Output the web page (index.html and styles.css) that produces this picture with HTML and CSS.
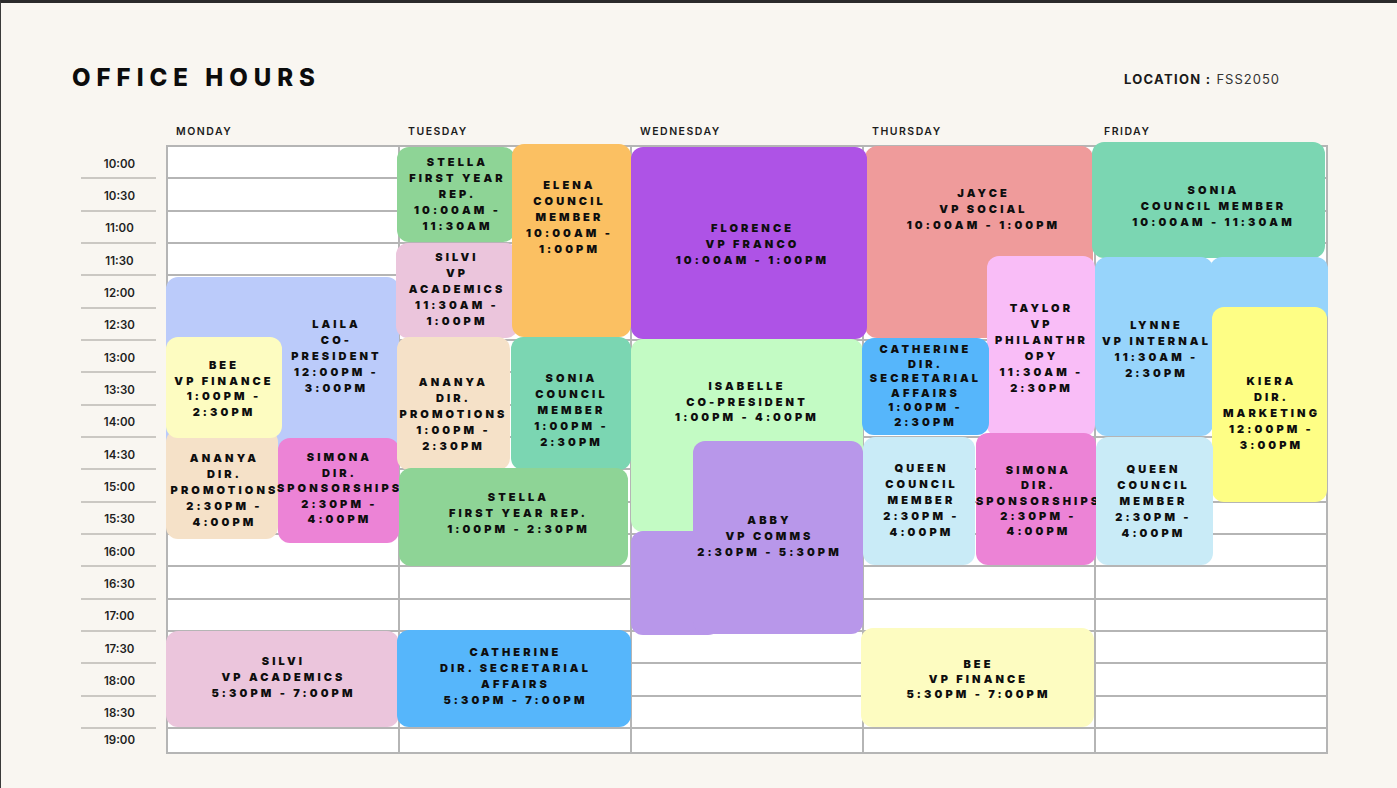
FILE: index.html
```html
<!DOCTYPE html>
<html lang="en">
<head>
<meta charset="utf-8">
<title>Office Hours</title>
<link rel="stylesheet" href="styles.css">
</head>
<body>
<div class="page">
  <header class="top">
    <h1 class="title">OFFICE HOURS</h1>
    <div class="location"><b>LOCATION :</b> <span>FSS2050</span></div>
  </header>

  <section class="board">
    <div class="days">
      <div class="day">MONDAY</div>
      <div class="day">TUESDAY</div>
      <div class="day">WEDNESDAY</div>
      <div class="day">THURSDAY</div>
      <div class="day">FRIDAY</div>
    </div>

    <div class="body">
      <div class="times">
        <div class="time">10:00</div>
        <div class="time">10:30</div>
        <div class="time">11:00</div>
        <div class="time">11:30</div>
        <div class="time">12:00</div>
        <div class="time">12:30</div>
        <div class="time">13:00</div>
        <div class="time">13:30</div>
        <div class="time">14:00</div>
        <div class="time">14:30</div>
        <div class="time">15:00</div>
        <div class="time">15:30</div>
        <div class="time">16:00</div>
        <div class="time">16:30</div>
        <div class="time">17:00</div>
        <div class="time">17:30</div>
        <div class="time">18:00</div>
        <div class="time">18:30</div>
        <div class="time last">19:00</div>
      </div>

      <div class="grid">
        <div class="row"></div><div class="row"></div><div class="row"></div>
        <div class="row"></div><div class="row"></div><div class="row"></div>
        <div class="row"></div><div class="row"></div><div class="row"></div>
        <div class="row"></div><div class="row"></div><div class="row"></div>
        <div class="row"></div><div class="row"></div><div class="row"></div>
        <div class="row"></div><div class="row"></div><div class="row"></div>
        <div class="row last"></div>

        <!-- Monday -->
        <div class="ev c-blue-soft mon-laila"><p>LAILA<br>CO-<br>PRESIDENT<br>12:00PM -<br>3:00PM</p></div>
        <div class="ev c-peach mon-ananya"><p>ANANYA<br>DIR.<br>PROMOTIONS<br>2:30PM -<br>4:00PM</p></div>
        <div class="ev c-cream mon-bee"><p>BEE<br>VP FINANCE<br>1:00PM -<br>2:30PM</p></div>
        <div class="ev c-magenta mon-simona"><p>SIMONA<br>DIR.<br>SPONSORSHIPS<br>2:30PM -<br>4:00PM</p></div>
        <div class="ev c-rose mon-silvi"><p>SILVI<br>VP ACADEMICS<br>5:30PM - 7:00PM</p></div>

        <!-- Tuesday -->
        <div class="ev c-rose tue-silvi"><p>SILVI<br>VP<br>ACADEMICS<br>11:30AM -<br>1:00PM</p></div>
        <div class="ev c-green tue-stella1"><p>STELLA<br>FIRST YEAR<br>REP.<br>10:00AM -<br>11:30AM</p></div>
        <div class="ev c-orange tue-elena"><p>ELENA<br>COUNCIL<br>MEMBER<br>10:00AM -<br>1:00PM</p></div>
        <div class="ev c-peach tue-ananya"><p>ANANYA<br>DIR.<br>PROMOTIONS<br>1:00PM -<br>2:30PM</p></div>
        <div class="ev c-teal tue-sonia"><p>SONIA<br>COUNCIL<br>MEMBER<br>1:00PM -<br>2:30PM</p></div>
        <div class="ev c-green tue-stella2"><p>STELLA<br>FIRST YEAR REP.<br>1:00PM - 2:30PM</p></div>
        <div class="ev c-blue tue-catherine"><p>CATHERINE<br>DIR. SECRETARIAL<br>AFFAIRS<br>5:30PM - 7:00PM</p></div>

        <!-- Wednesday / Thursday top -->
        <div class="ev c-salmon thu-jayce"><p>JAYCE<br>VP SOCIAL<br>10:00AM - 1:00PM</p></div>
        <div class="ev c-purple wed-florence"><p>FLORENCE<br>VP FRANCO<br>10:00AM - 1:00PM</p></div>
        <div class="ev c-mint wed-isabelle"><p>ISABELLE<br>CO-PRESIDENT<br>1:00PM - 4:00PM</p></div>
        <div class="ev c-lavender wed-abby-tail"></div>
        <div class="ev c-lavender wed-abby"><p>ABBY<br>VP COMMS<br>2:30PM - 5:30PM</p></div>

        <!-- Thursday -->
        <div class="ev c-pink thu-taylor"><p>TAYLOR<br>VP<br>PHILANTHR<br>OPY<br>11:30AM -<br>2:30PM</p></div>
        <div class="ev c-blue thu-catherine"><p>CATHERINE<br>DIR.<br>SECRETARIAL<br>AFFAIRS<br>1:00PM -<br>2:30PM</p></div>
        <div class="ev c-ice thu-queen"><p>QUEEN<br>COUNCIL<br>MEMBER<br>2:30PM -<br>4:00PM</p></div>
        <div class="ev c-magenta thu-simona"><p>SIMONA<br>DIR.<br>SPONSORSHIPS<br>2:30PM -<br>4:00PM</p></div>
        <div class="ev c-cream thu-bee"><p>BEE<br>VP FINANCE<br>5:30PM - 7:00PM</p></div>

        <!-- Friday -->
        <div class="ev c-teal fri-sonia"><p>SONIA<br>COUNCIL MEMBER<br>10:00AM - 11:30AM</p></div>
        <div class="ev c-sky fri-lynne-tail"></div>
        <div class="ev c-sky fri-lynne"><p>LYNNE<br>VP INTERNAL<br>11:30AM -<br>2:30PM</p></div>
        <div class="ev c-yellow fri-kiera"><p>KIERA<br>DIR.<br>MARKETING<br>12:00PM -<br>3:00PM</p></div>
        <div class="ev c-ice fri-queen"><p>QUEEN<br>COUNCIL<br>MEMBER<br>2:30PM -<br>4:00PM</p></div>
      </div>
    </div>
  </section>
</div>
</body>
</html>
```

FILE: styles.css
```css
* { box-sizing: border-box; }

html, body {
  margin: 0;
  padding: 0;
}

body {
  background: #f9f6f1;
  font-family: Inter, "Liberation Sans", sans-serif;
  color: #111;
}

.page {
  width: 1397px;
  height: 788px;
  border-top: 3px solid #2b2b2b;
  border-left: 1px solid #3a3a3a;
  overflow: hidden;
}

/* ---------- header ---------- */
.top {
  display: flex;
  align-items: center;
  justify-content: space-between;
  margin-top: 61px;
  padding-left: 71px;
  padding-right: 117px;
  height: 28px;
}

.title {
  margin: 0;
  font-size: 24px;
  line-height: 28px;
  font-weight: 800;
  letter-spacing: 6px;
  color: #0c0c0c;
}

.location {
  font-size: 13px;
  line-height: 28px;
  letter-spacing: 1.3px;
  color: #1a1a1a;
  padding-top: 1px;
}

.location b { font-weight: 700; }
.location span { font-weight: 400; letter-spacing: 1px; color: #333; }

/* ---------- board ---------- */
.board {
  margin-top: 33px;
  padding-left: 80px;
}

.days {
  display: grid;
  grid-template-columns: repeat(5, 232px);
  margin-left: 85px;
  height: 14px;
  margin-bottom: 8px;
}

.day {
  padding-left: 10px;
  font-size: 10.5px;
  line-height: 14px;
  font-weight: 600;
  letter-spacing: 1.5px;
  color: #1c1c1c;
}

.body {
  display: flex;
  gap: 10px;
  align-items: flex-start;
}

/* ---------- time column ---------- */
.times {
  width: 75px;
  display: flex;
  flex-direction: column;
}

.time {
  height: 32.33px;
  display: flex;
  align-items: center;
  justify-content: center;
  border-bottom: 2px solid #cbc8c3;
  font-size: 11.5px;
  font-weight: 600;
  color: #1e1e1e;
  padding-left: 2px;
  padding-top: 3px;
}

.time.last {
  height: 23px;
  padding-top: 0;
  border-bottom: none;
}

/* ---------- grid ---------- */
.grid {
  position: relative;
  width: 1162px;
  background-color: #fff;
  background-image: linear-gradient(to right, #b5b5b5 0, #b5b5b5 2px, transparent 2px);
  background-size: 232px 100%;
  border-right: 2px solid #b5b5b5;
  border-bottom: 2px solid #b5b5b5;
  border-top: 2px solid #b5b5b5;
  margin-top: -2px;
}

.row {
  height: 32.33px;
  border-bottom: 2px solid #b5b5b5;
}

.row.last {
  height: 23px;
  border-bottom: none;
}

/* ---------- events ---------- */
.ev {
  position: absolute;
  border-radius: 12px;
  display: flex;
  flex-direction: column;
  align-items: center;
  text-align: center;
  white-space: nowrap;
  font-size: 11px;
  font-weight: 900;
  line-height: 16px;
  letter-spacing: 3.1px;
  color: #0e0e0e;
}

.ev p { margin: 0; }

.c-blue-soft { background: #bbcbfa; }
.c-peach     { background: #f5e1c8; }
.c-cream     { background: #fdfcc1; }
.c-magenta   { background: #ec83d6; }
.c-rose      { background: #ebc5dc; }
.c-green     { background: #8ed496; }
.c-orange    { background: #fbc062; }
.c-teal      { background: #7bd6b2; }
.c-blue      { background: #56b6fb; }
.c-purple    { background: #ae53e6; }
.c-mint      { background: #c3fbc4; }
.c-lavender  { background: #b897ea; }
.c-salmon    { background: #ef9b9b; }
.c-pink      { background: #f9bdf7; }
.c-ice       { background: #c9ebf7; }
.c-sky       { background: #97d4fb; }
.c-yellow    { background: #fefe85; }

/* Monday */
.mon-laila   { left: 0;   top: 130px; width: 233px; height: 191px; padding-top: 39px; padding-left: 108px; }
.mon-ananya  { left: 0;   top: 283px; width: 112px; height: 109px; padding-top: 20px; padding-left: 5px; }
.mon-bee     { left: 0;   top: 190px; width: 116px; height: 101px; padding-top: 21px; line-height: 15.5px; }
.mon-simona  { left: 112px; top: 291px; width: 121px; height: 105px; padding-top: 12px; padding-left: 2px; line-height: 15.5px; }
.mon-silvi   { left: 0;   top: 484px; width: 233px; height: 96px; padding-top: 22px; padding-left: 2px; }

/* Tuesday */
.tue-silvi    { left: 230px; top: 96px;  width: 122px; height: 95px;  padding-top: 6px; }
.tue-stella1  { left: 231px; top: 0;     width: 118px; height: 95px;  padding-top: 7px; padding-left: 3px; }
.tue-elena    { left: 346px; top: -3px;  width: 119px; height: 193px; padding-top: 33px; padding-right: 4px; }
.tue-ananya   { left: 231px; top: 190px; width: 113px; height: 133px; padding-top: 37px; }
.tue-sonia    { left: 345px; top: 190px; width: 120px; height: 133px; padding-top: 33px; padding-left: 1px; }
.tue-stella2  { left: 233px; top: 321px; width: 229px; height: 98px;  padding-top: 21px; padding-left: 10px; }
.tue-catherine{ left: 231px; top: 483px; width: 234px; height: 97px;  padding-top: 14px; padding-left: 3px; }

/* Wednesday */
.wed-florence { left: 465px; top: 0;     width: 236px; height: 192px; padding-top: 73px; padding-left: 7px; }
.wed-isabelle { left: 465px; top: 192px; width: 232px; height: 193px; padding-top: 40px; line-height: 15.5px; }
.wed-abby-tail{ left: 465px; top: 384px; width: 89px;  height: 104px; }
.wed-abby     { left: 527px; top: 294px; width: 170px; height: 193px; padding-top: 71px; padding-right: 17px; }

/* Thursday */
.thu-jayce    { left: 699px; top: -1px;  width: 228px; height: 192px; padding-top: 39px; padding-left: 9px; }
.thu-taylor   { left: 821px; top: 109px; width: 108px; height: 181px; padding-top: 44px; padding-left: 1px; }
.thu-catherine{ left: 696px; top: 191px; width: 127px; height: 97px;  padding-top: 4px; line-height: 14.6px; }
.thu-queen    { left: 697px; top: 290px; width: 112px; height: 128px; padding-top: 23px; padding-left: 5px; }
.thu-simona   { left: 810px; top: 286px; width: 120px; height: 132px; padding-top: 30px; padding-left: 5px; line-height: 15.3px; }
.thu-bee      { left: 695px; top: 481px; width: 233px; height: 99px;  padding-top: 29px; padding-left: 2px; line-height: 15px; }

/* Friday */
.fri-sonia     { left: 926px;  top: -5px;  width: 233px; height: 116px; padding-top: 40px; padding-left: 10px; }
.fri-lynne-tail{ left: 1044px; top: 110px; width: 118px; height: 68px; }
.fri-lynne     { left: 929px;  top: 110px; width: 118px; height: 179px; padding-top: 60px; padding-left: 5px; }
.fri-kiera     { left: 1046px; top: 160px; width: 115px; height: 195px; padding-top: 66px; padding-left: 4px; }
.fri-queen     { left: 930px;  top: 290px; width: 117px; height: 128px; padding-top: 24px; padding-right: 2px; }
```
